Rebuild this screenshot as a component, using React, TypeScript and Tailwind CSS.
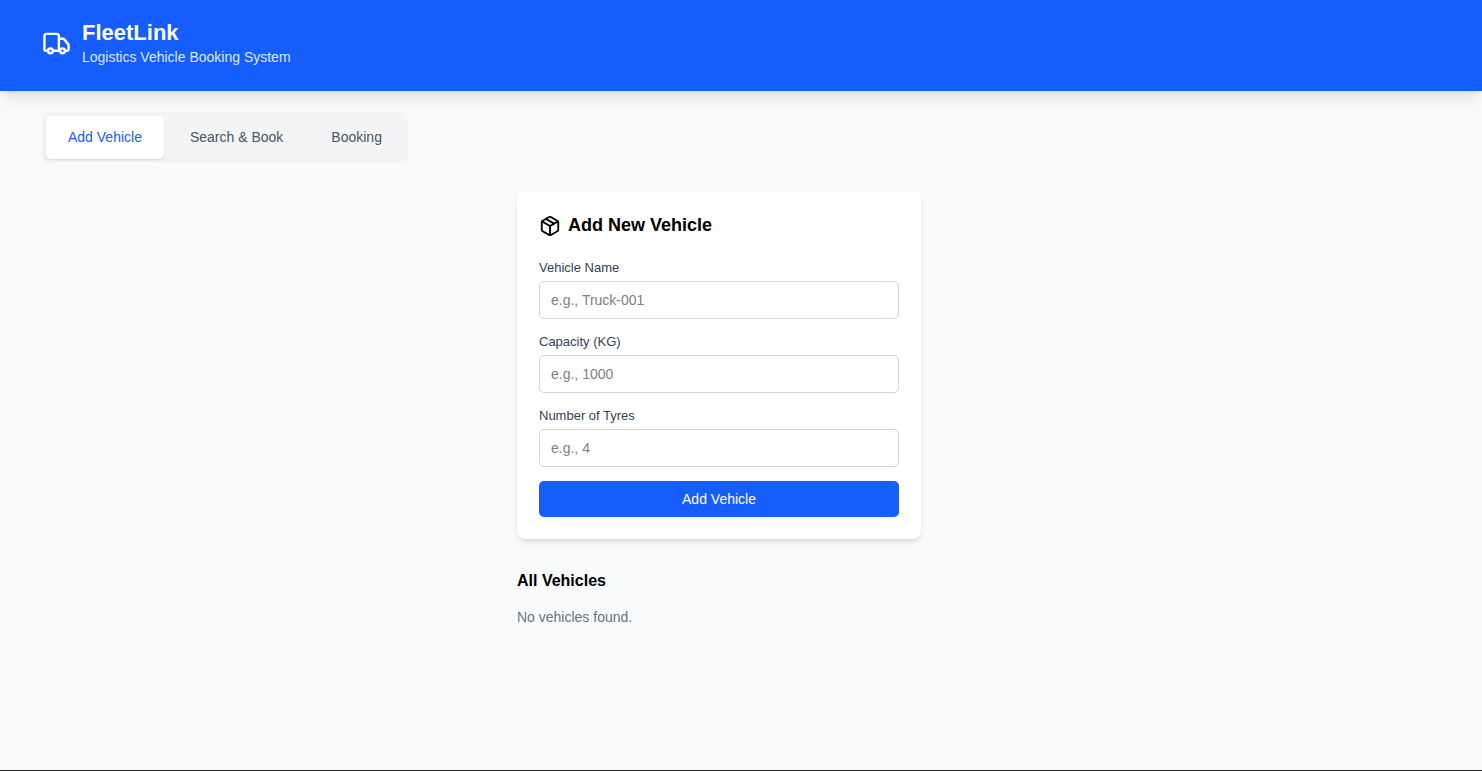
import { useState } from "react";
import { Package, Truck } from "lucide-react";

const tabs = [
  { id: "add", label: "Add Vehicle" },
  { id: "search", label: "Search & Book" },
  { id: "booking", label: "Booking" },
];

const fields = [
  { name: "name", label: "Vehicle Name", placeholder: "e.g., Truck-001" },
  { name: "capacity", label: "Capacity (KG)", placeholder: "e.g., 1000" },
  { name: "tyres", label: "Number of Tyres", placeholder: "e.g., 4" },
];

function Header() {
  return (
    <header className="bg-blue-600 text-white shadow-lg">
      <div className="flex items-center gap-[11px] pt-[18px] pb-[23px] pl-[42px] pr-[86px]">
        <Truck size={29} />
        <div>
          <h1 className="text-[22px] leading-[29px] font-bold">FleetLink</h1>
          <p className="text-[14px] leading-[21px] text-blue-100">
            Logistics Vehicle Booking System
          </p>
        </div>
      </div>
    </header>
  );
}

function AddVehicle() {
  const [form, setForm] = useState({ name: "", capacity: "", tyres: "" });

  return (
    <form
      className="bg-white rounded-lg shadow-md p-[22px]"
      onSubmit={(e) => e.preventDefault()}
    >
      <h2 className="flex items-center gap-[7px] mb-[22px] text-[18px] leading-[23px] font-bold">
        <Package size={22} />
        Add New Vehicle
      </h2>
      <div className="flex flex-col gap-[14px]">
        {fields.map((field) => (
          <div key={field.name}>
            <label
              htmlFor={field.name}
              className="block mb-1 text-[13px] leading-[18px] text-gray-700"
            >
              {field.label}
            </label>
            <input
              id={field.name}
              type="text"
              placeholder={field.placeholder}
              value={form[field.name]}
              onChange={(e) =>
                setForm({ ...form, [field.name]: e.target.value })
              }
              className="block w-full h-[38px] px-[11px] text-[14px] border border-gray-300 rounded-[5px] placeholder:text-[#808080]"
            />
          </div>
        ))}
        <button
          type="submit"
          className="w-full h-9 bg-blue-600 hover:bg-blue-700 text-white text-[14px] rounded-[5px]"
        >
          Add Vehicle
        </button>
      </div>
    </form>
  );
}

export default function App() {
  const [activeTab, setActiveTab] = useState("add");

  return (
    <div className="min-h-screen flex flex-col bg-gray-50 text-black font-['Liberation_Sans',Arial,sans-serif]">
      <Header />
      <main className="grow pt-[21px] pl-[42px] pr-[86px]">
        <nav className="flex w-fit gap-1 p-1 bg-gray-100 rounded-md">
          {tabs.map((tab) => (
            <button
              key={tab.id}
              type="button"
              onClick={() => setActiveTab(tab.id)}
              className={`px-[22px] py-[11px] text-[14px] leading-[21px] rounded-[5px] ${
                activeTab === tab.id
                  ? "bg-white text-blue-600 shadow-sm"
                  : "text-gray-600"
              }`}
            >
              {tab.label}
            </button>
          ))}
        </nav>
        <div className="mx-auto mt-[29px] max-w-[404px]">
          <AddVehicle />
          <section className="mt-[29px]">
            <h3 className="mb-3 text-[16px] leading-[26px] font-bold">
              All Vehicles
            </h3>
            <p className="text-[14px] leading-[22px] text-gray-500">
              No vehicles found.
            </p>
          </section>
        </div>
      </main>
      <div className="h-px bg-neutral-800" />
    </div>
  );
}
